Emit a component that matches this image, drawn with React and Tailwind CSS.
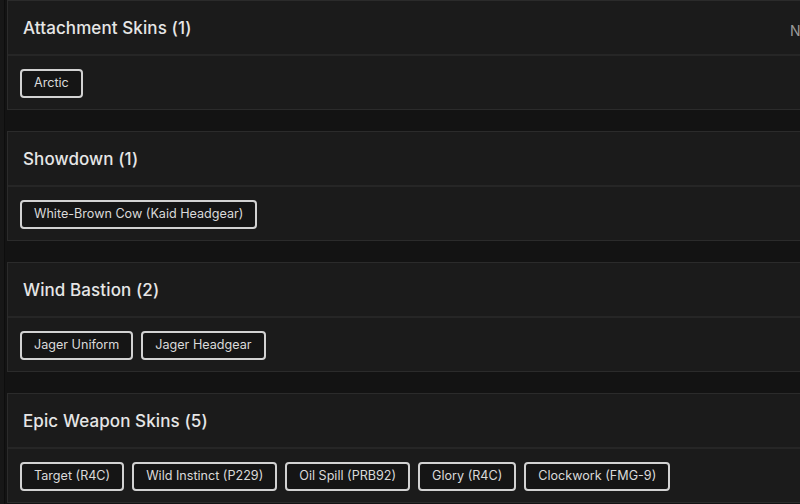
import React from "react";

const sections = [
  { title: "Attachment Skins (1)", right: "New", items: ["Arctic"] },
  { title: "Showdown (1)", items: ["White-Brown Cow (Kaid Headgear)"] },
  { title: "Wind Bastion (2)", items: ["Jager Uniform", "Jager Headgear"] },
  {
    title: "Epic Weapon Skins (5)",
    items: ["Target (R4C)", "Wild Instinct (P229)", "Oil Spill (PRB92)", "Glory (R4C)", "Clockwork (FMG-9)"],
  },
];

export default function App() {
  return (
    <div
      className="w-[800px] h-[504px] overflow-hidden bg-[#131313] flex"
      style={{ fontFamily: "Inter, 'Noto Sans', sans-serif" }}
    >
      <div className="w-[5px] shrink-0 bg-[#171717] border-r border-[#0d0d0d]" />
      <div className="flex flex-col gap-[21px] pl-[2px] shrink-0">
        {sections.map((s) => (
          <div key={s.title} className="w-[840px] h-[110px] bg-[#1b1b1b] border border-[#2b2b2b] flex flex-col">
            <div className="h-[55px] pl-[15px] flex items-center justify-between border-b-2 border-[#262626]">
              <span className="text-[17px] leading-none font-medium text-[#e6e6e6] tracking-[0.1px] mt-[1px]">{s.title}</span>
              {s.right ? (
                <span className="w-[56px] text-[14px] text-[#9a9a9a] mt-[6px]">{s.right}</span>
              ) : null}
            </div>
            <div className="px-3 pt-[13px] flex gap-2">
              {s.items.map((it) => (
                <span
                  key={it}
                  className="h-[29px] px-3 flex items-center rounded-[4px] border-2 border-[#d2d2d2] bg-[#151515] text-[12.6px] text-[#dadada] whitespace-nowrap"
                >
                  {it}
                </span>
              ))}
            </div>
          </div>
        ))}
      </div>
    </div>
  );
}
